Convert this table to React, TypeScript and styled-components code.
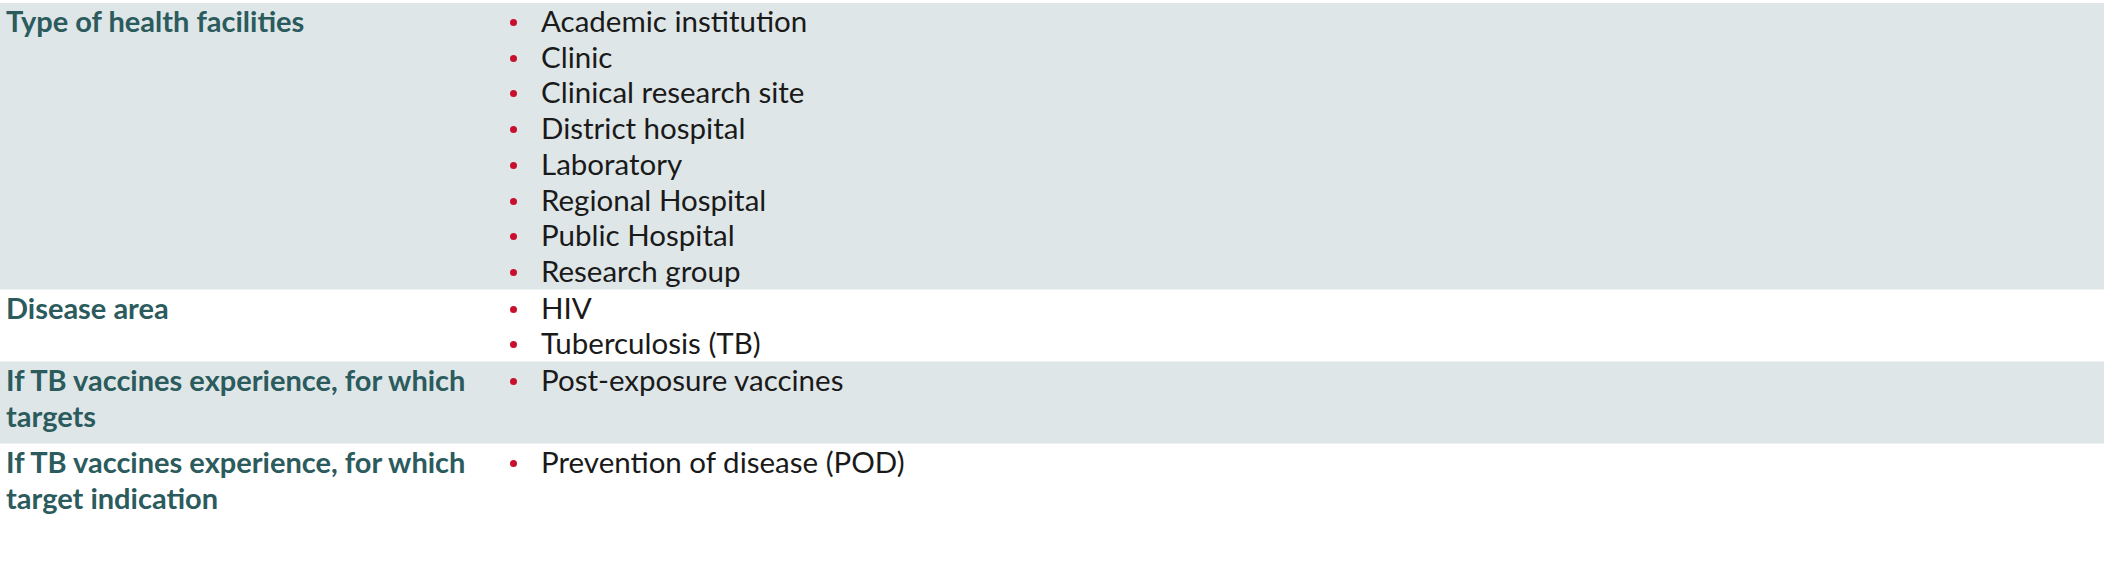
import React from "react";
import styled, { createGlobalStyle } from "styled-components";

const GlobalStyle = createGlobalStyle`
  html, body {
    margin: 0;
    padding: 0;
    background: #ffffff;
  }
  body {
    font-family: Lato, "Open Sans", sans-serif;
  }
`;

type Row = { label: string; items: string[] };

const rows: Row[] = [
  {
    label: "Type of health facilities",
    items: [
      "Academic institution",
      "Clinic",
      "Clinical research site",
      "District hospital",
      "Laboratory",
      "Regional Hospital",
      "Public Hospital",
      "Research group",
    ],
  },
  { label: "Disease area", items: ["HIV", "Tuberculosis (TB)"] },
  {
    label: "If TB vaccines experience, for which targets",
    items: ["Post-exposure vaccines"],
  },
  {
    label: "If TB vaccines experience, for which target indication",
    items: ["Prevention of disease (POD)"],
  },
];

export default function App() {
  return (
    <>
      <GlobalStyle />
      <Table>
        {rows.map((row, i) => (
          <TableRow key={row.label} $shaded={i % 2 === 0}>
            <Label>{row.label}</Label>
            <List>
              {row.items.map((item) => (
                <Item key={item}>{item}</Item>
              ))}
            </List>
          </TableRow>
        ))}
      </Table>
    </>
  );
}

const Table = styled.div`
  display: flex;
  flex-direction: column;
  padding-top: 3px;
`;

const TableRow = styled.div<{ $shaded: boolean }>`
  display: grid;
  grid-template-columns: 500px 1fr;
  align-items: start;
  background: ${(p) => (p.$shaded ? "#dfe6e8" : "#ffffff")};
  border-bottom: 1px solid #edf1f2;

  &:last-child {
    border-bottom: none;
  }
`;

const Label = styled.div`
  padding: 0 0 10px 6px;
  width: 470px;
  font-size: 29px;
  line-height: 35.7px;
  font-weight: 700;
  color: #2b5b5d;
`;

const List = styled.ul`
  list-style: none;
  margin: 0;
  padding: 0;
`;

const Item = styled.li`
  position: relative;
  padding-left: 41px;
  font-size: 29.5px;
  line-height: 35.7px;
  color: #1a1a1a;

  &::before {
    content: "";
    position: absolute;
    left: 10px;
    top: 16px;
    width: 7px;
    height: 7px;
    border-radius: 50%;
    background: #c8102e;
  }
`;
